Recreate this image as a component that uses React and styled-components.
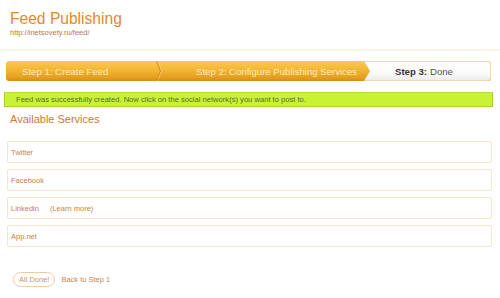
import React from 'react'
import styled, {createGlobalStyle, css} from 'styled-components'

const GlobalStyle = createGlobalStyle`
  html, body {
    margin: 0;
    padding: 0;
    background: #fff;
  }
  body {
    font-family: "Liberation Sans", Arial, sans-serif;
  }
`

const Header = styled.header`
  box-sizing: border-box;
  height: 51px;
  padding: 10px 10px 0;
  border-bottom: 2px solid #fdf2e4;
`

const Title = styled.h1`
  margin: 0;
  font-size: 15.6px;
  line-height: 17px;
  font-weight: normal;
  color: #e4882c;
`

const FeedUrl = styled.a`
  display: block;
  margin-top: 1px;
  font-size: 7.5px;
  line-height: 9px;
  color: #b77a45;
  text-decoration: none;
`

const Content = styled.main`
  padding: 0 7px 0 4px;
`

const StepBar = styled.div`
  display: flex;
  height: 20px;
  margin: 10px 2px 0;
  border-radius: 3px;
  overflow: hidden;
  background: linear-gradient(#fbca50 0%, #f3b535 45%, #e39d1f 85%, #d48d15 100%);
`

const orangeStep = css`
  color: #fdebbd;
`

const Step = styled.div`
  position: relative;
  box-sizing: border-box;
  flex: ${({$width}) => ($width ? `0 0 ${$width}px` : '1 1 auto')};
  padding-left: ${({$pad}) => $pad}px;
  display: flex;
  align-items: center;
  font-size: 9.6px;
  white-space: nowrap;
  ${({$active}) => !$active && orangeStep};
`

const ChevronStep = styled(Step)`
  &::before,
  &::after {
    content: '';
    position: absolute;
    right: 2px;
    width: 6px;
    height: 10px;
    border-right: 1px solid #d28c1a;
    box-shadow: 1px 0 0 rgba(255, 220, 130, 0.6);
  }
  &::before {
    top: 0;
    transform: skewX(22deg);
    transform-origin: bottom right;
  }
  &::after {
    top: 10px;
    transform: skewX(-22deg);
    transform-origin: top right;
  }
`

const ActiveStep = styled(Step)`
  color: #555;
  background: linear-gradient(#ffffff 0%, #fbfbfb 60%, #ececec 100%);
  border: 1px solid #f2d9b0;
  border-left: 0;
  border-radius: 0 3px 3px 0;
  clip-path: polygon(0 0, 100% 0, 100% 100%, 0 100%, 6px 50%);

  b {
    color: #333;
    margin-right: 3px;
  }
`

const Message = styled.div`
  box-sizing: border-box;
  height: 15px;
  margin-top: 11px;
  padding-left: 11px;
  display: flex;
  align-items: center;
  background: #c9f234;
  border: 1px solid #a9d02c;
  border-top-color: #b5da3a;
  font-size: 7.6px;
  color: #5b6a35;
`

const SectionTitle = styled.h2`
  margin: 6px 0 0 6px;
  font-size: 11px;
  line-height: 13px;
  font-weight: normal;
  color: #cf7b2e;
`

const ServiceList = styled.ul`
  list-style: none;
  margin: 15px 1px 0 3px;
  padding: 0;
  display: flex;
  flex-direction: column;
  gap: 6px;
`

const Service = styled.li`
  box-sizing: border-box;
  height: 22px;
  padding-left: 3px;
  display: flex;
  align-items: center;
  gap: 11px;
  border: 1px solid #f6e6cc;
  border-radius: 2px;
  font-size: 7.5px;
  color: #c98149;
`

const Actions = styled.div`
  display: flex;
  align-items: center;
  gap: 6px;
  margin: 25px 0 0 9px;
`

const DoneButton = styled.button`
  box-sizing: border-box;
  height: 15px;
  padding: 0 5px;
  border: 1px solid #f1caa0;
  border-radius: 8px;
  background: #fff;
  font-family: inherit;
  font-size: 7.5px;
  color: #c99565;
`

const BackLink = styled.a`
  font-size: 7.5px;
  color: #cc8550;
  text-decoration: none;
`

const services = [
  {name: 'Twitter'},
  {name: 'Facebook'},
  {name: 'Linkedin', extra: '(Learn more)'},
  {name: 'App.net'}
]

export default function App() {
  return (
    <>
      <GlobalStyle />
      <Header>
        <Title>Feed Publishing</Title>
        <FeedUrl href="#">http://inetsovety.ru/feed/</FeedUrl>
      </Header>
      <Content>
        <StepBar>
          <ChevronStep $width={157} $pad={16}>
            Step 1: Create Feed
          </ChevronStep>
          <Step $width={201} $pad={33}>
            Step 2: Configure Publishing Services
          </Step>
          <ActiveStep $active $pad={31}>
            <b>Step 3:</b> Done
          </ActiveStep>
        </StepBar>
        <Message>
          Feed was successfully created. Now click on the social network(s) you want to post to.
        </Message>
        <SectionTitle>Available Services</SectionTitle>
        <ServiceList>
          {services.map(s => (
            <Service key={s.name}>
              <span>{s.name}</span>
              {s.extra && <span>{s.extra}</span>}
            </Service>
          ))}
        </ServiceList>
        <Actions>
          <DoneButton>All Done!</DoneButton>
          <BackLink href="#">Back to Step 1</BackLink>
        </Actions>
      </Content>
    </>
  )
}
